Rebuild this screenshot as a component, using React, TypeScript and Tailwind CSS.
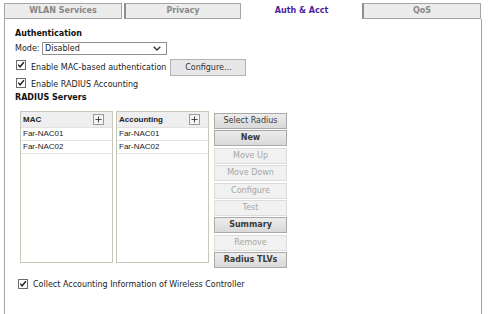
import React from "react";

const Check = () => (
  <svg width="10" height="10" viewBox="0 0 10 10" className="shrink-0">
    <rect x="0.5" y="0.5" width="9" height="9" fill="#fff" stroke="#6b6b6b" />
    <path d="M2.2 4.6 L4.1 6.8 L7.9 2.3" fill="none" stroke="#222" strokeWidth="1.4" />
  </svg>
);

const ListBox = ({ title, items }: { title: string; items: string[] }) => (
  <div className="w-[93px] h-[152px] border border-[#c9c6ba] bg-white flex flex-col">
    <div className="h-[16px] bg-[#eeeeee] flex items-center justify-between pl-[2px] pr-[8px] border-b border-[#e2e2e2]">
      <span className="font-bold text-[8px] text-[#222]" style={{ fontFamily: "'Liberation Sans', Arial, sans-serif" }}>{title}</span>
      <div className="w-[11px] h-[11px] border border-[#9a9a9a] bg-[#f4f4f4] flex items-center justify-center">
        <svg width="7" height="7" viewBox="0 0 7 7">
          <path d="M3.5 0.5 V6.5 M0.5 3.5 H6.5" stroke="#444" strokeWidth="1" />
        </svg>
      </div>
    </div>
    {items.map((it) => (
      <div key={it} className="h-[13px] flex items-center pl-[2px] border-b border-[#e3e3e3] text-[8px] text-[#222]" style={{ fontFamily: "'Liberation Sans', Arial, sans-serif" }}>
        {it}
      </div>
    ))}
  </div>
);

const Btn = ({ label, enabled, bold }: { label: string; enabled: boolean; bold?: boolean }) => (
  <div
    className={
      enabled
        ? "h-[16px] w-[73px] flex items-center justify-center border border-[#a9a9a9] bg-gradient-to-b from-[#ececec] to-[#d9d9d9] text-[#3a3a3a]"
        : "h-[16px] w-[73px] flex items-center justify-center border border-[#dcdcdc] bg-[#f1f1f1] text-[#a6a6a6]"
    }
  >
    <span className={bold ? "font-bold" : ""}>{label}</span>
  </div>
);

export default function App() {
  return (
    <div
      className="w-[490px] h-[314px] bg-white overflow-hidden flex flex-col text-[8px] leading-[12px] text-[#222]"
      style={{ fontFamily: "'DejaVu Sans', Verdana, sans-serif" }}
    >
      {/* tabs */}
      <div className="flex mt-[3px] ml-[4px] h-[16px]">
        <div className="w-[118px] h-[16px] bg-[#ececec] border border-[#a5a5a5] flex items-center justify-center font-bold text-[#888888]">
          WLAN Services
        </div>
        <div className="w-[117px] ml-[2px] h-[16px] bg-[#ececec] border border-[#a5a5a5] border-l-2 border-l-[#8e8e8e] flex items-center justify-center font-bold text-[#888888]">
          Privacy
        </div>
        <div className="w-[121px] h-[16px] bg-white flex items-center justify-center font-bold text-[#4b1fa0]">
          Auth &amp; Acct
        </div>
        <div className="w-[119px] h-[16px] bg-[#ececec] border border-[#a5a5a5] border-l-2 border-l-[#8e8e8e] flex items-center justify-center font-bold text-[#888888]">
          QoS
        </div>
      </div>

      {/* panel */}
      <div className="ml-[4px] w-[478px] flex-1 border-l border-r border-[#a5a5a5] pl-[10px] flex flex-col">
        <div className="mt-[9px] h-[12px] font-bold text-[#111]">Authentication</div>

        <div className="mt-[2px] h-[13px] flex items-center">
          <span className="w-[27px]">Mode:</span>
          <div className="w-[125px] h-[13px] border border-[#8f8f8f] flex items-center justify-between pl-[2px] pr-[5px]">
            <span>Disabled</span>
            <svg width="8" height="5" viewBox="0 0 8 5">
              <path d="M0.7 0.7 L4 4 L7.3 0.7" fill="none" stroke="#333" strokeWidth="1.3" />
            </svg>
          </div>
        </div>

        <div className="mt-[4px] h-[17px] flex items-center">
          <div className="ml-[1px] self-start mt-[1px]"><Check /></div>
          <span className="ml-[5px]">Enable MAC-based authentication</span>
          <div className="ml-[4px] w-[76px] h-[17px] border border-[#b3b3b3] bg-[#e7e7e7] flex items-center justify-center text-[#333]">
            Configure...
          </div>
        </div>

        <div className="mt-[2px] h-[13px] flex items-center">
          <div className="ml-[1px] self-start"><Check /></div>
          <span className="ml-[5px]">Enable RADIUS Accounting</span>
        </div>

        <div className="mt-[1px] h-[11px] font-bold text-[#111] leading-[11px]">RADIUS Servers</div>

        <div className="mt-[8px] ml-[5px] flex">
          <ListBox title="MAC" items={["Far-NAC01", "Far-NAC02"]} />
          <div className="ml-[3px]">
            <ListBox title="Accounting" items={["Far-NAC01", "Far-NAC02"]} />
          </div>
          <div className="ml-[5px] mt-[2px] flex flex-col gap-[1.4px]">
            <Btn label="Select Radius" enabled />
            <Btn label="New" enabled bold />
            <Btn label="Move Up" enabled={false} />
            <Btn label="Move Down" enabled={false} />
            <Btn label="Configure" enabled={false} />
            <Btn label="Test" enabled={false} />
            <Btn label="Summary" enabled bold />
            <Btn label="Remove" enabled={false} />
            <Btn label="Radius TLVs" enabled bold />
          </div>
        </div>

        <div className="mt-[11px] h-[12px] flex items-center">
          <div className="ml-[3px] self-start"><Check /></div>
          <span className="ml-[5px]">Collect Accounting Information of Wireless Controller</span>
        </div>
      </div>
    </div>
  );
}
